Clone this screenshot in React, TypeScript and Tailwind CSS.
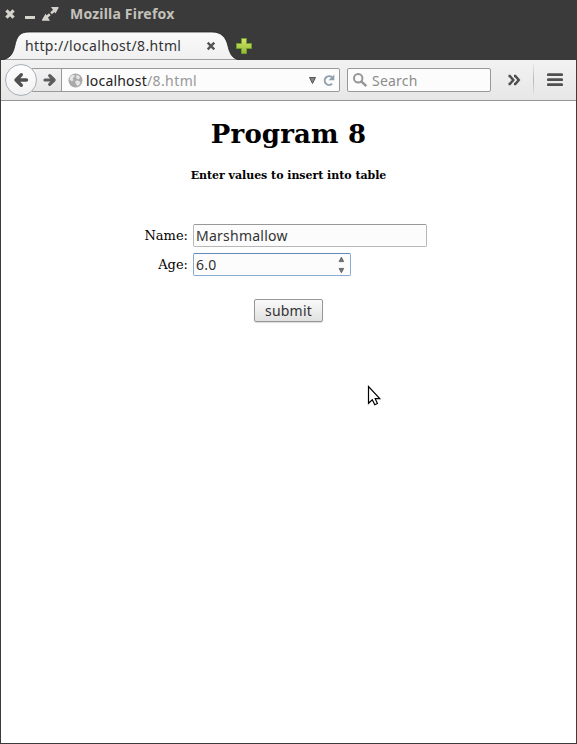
const UI = "font-['Noto_Sans','Open_Sans',sans-serif]";

function TitleBar() {
  return (
    <div className="flex h-7 items-center">
      <svg className="ml-[3px] shrink-0" width="56" height="28" viewBox="0 0 56 28" fill="none">
        <path d="M2.4 10.4 9.6 17.6M9.6 10.4 2.4 17.6" stroke="#d6d3cc" strokeWidth="3.2" />
        <path d="M21 17.5h10" stroke="#d6d3cc" strokeWidth="3" />
        <path d="M42 17.5 51 10" stroke="#d6d3cc" strokeWidth="2.6" strokeDasharray="5 1.6" />
        <path d="M47 7h7.5v1L51.5 13.5zM38 20.8v-1L41.5 13.8 46 20.8z" fill="#d6d3cc" />
      </svg>
      <span className="ml-[10px] whitespace-nowrap text-[14px] font-bold leading-7 tracking-[0.2px] text-[#c4c1bb]">
        Mozilla Firefox
      </span>
    </div>
  );
}

function TabStrip() {
  return (
    <div className="flex h-8">
      <div className="relative h-8 w-[239px] shrink-0">
        <svg className="absolute inset-0" width="239" height="32" viewBox="0 0 239 32">
          <defs>
            <linearGradient id="tab" x1="0" y1="0" x2="0" y2="1">
              <stop offset="0" stopColor="#fafafa" />
              <stop offset="1" stopColor="#f0f0f0" />
            </linearGradient>
          </defs>
          <path
            d="M0 32C8 31 12 27 14 17C16 8 19 4 28 4H211C220 4 225 9 227 18C229 27 232 31 239 32Z"
            fill="url(#tab)"
            stroke="#242424"
            strokeWidth="0.8"
          />
        </svg>
        <div className="relative flex h-8 items-center pl-[24px] pt-1">
          <span className="w-[180px] whitespace-nowrap text-[14px] leading-7 tracking-[0.36px] text-[#333]">
            http://localhost/8.html
          </span>
          <svg width="12" height="12" viewBox="0 0 12 12">
            <path d="m2.7 2.7 6.6 6.6M9.3 2.7 2.7 9.3" stroke="#555" strokeWidth="2.4" />
          </svg>
        </div>
      </div>
      <svg className="-ml-[5px] mt-[9px]" width="18" height="18" viewBox="0 0 18 18">
        <defs>
          <linearGradient id="plus" x1="0" y1="0" x2="0" y2="1">
            <stop offset="0" stopColor="#d4e46c" />
            <stop offset="1" stopColor="#91bb32" />
          </linearGradient>
        </defs>
        <path
          d="M6.5 1.5h5v5h5v5h-5v5h-5v-5h-5v-5h5z"
          fill="url(#plus)"
          stroke="#6f9c2b"
        />
      </svg>
    </div>
  );
}

function NavBar() {
  return (
    <div className="flex h-[41px] items-center border-b border-[#969696] bg-linear-to-b from-[#f2f2f2] to-[#e7e7e7]">
      <div className="relative z-10 ml-[4px] flex size-8 shrink-0 items-center justify-center rounded-full border border-[#a8afb8] bg-linear-to-b from-[#fefefe] to-[#f2f2f2]">
        <svg width="16" height="16" viewBox="0 0 16 16" fill="none" stroke="#505050" strokeWidth="3.4" strokeLinejoin="round" strokeLinecap="round">
          <path d="M8.3 2.8 3 8l5.3 5.2M4 8h9.5" />
        </svg>
      </div>
      <div className="-ml-[5px] flex h-6 w-[308px] shrink-0 rounded-r-[2px] border border-[#989898] bg-[#fcfcfc]">
        <div className="flex w-[29px] items-center border-r border-[#989898] bg-linear-to-b from-[#f2f2f2] to-[#e6e6e6] pl-[10px]">
          <svg width="14" height="14" viewBox="0 0 14 14" fill="none" stroke="#5c5c5c" strokeWidth="3.2" strokeLinejoin="round" strokeLinecap="round">
            <path d="M6.7 2.6 11.1 7l-4.4 4.4M10 7H2" />
          </svg>
        </div>
        <div className="flex flex-1 items-center pl-[6px]">
          <svg width="15" height="15" viewBox="0 0 15 15">
            <circle cx="7.5" cy="7.5" r="7" fill="#aaa" />
            <path
              d="M2 3.8 4.5 2 7 2.5 6 4.5 4.5 5 5.5 7 4 8.5 1.7 6.5zM9 1.8l3 2-1 2.8-2.5-1L8 3.5zM7 8l3-.5 2.5 1.5-1 2.5L9.5 13 8 11z"
              fill="#e6e6e6"
            />
          </svg>
          <span className="ml-[3px] w-[222px] whitespace-nowrap pt-px text-[14px] leading-[22px]">
            <span className="tracking-[0.2px] text-[#222]">localhost</span>
            <span className="tracking-[0.4px] text-[#989898]">/8.html</span>
          </span>
          <svg width="30" height="14" viewBox="0 0 30 14" fill="none">
            <path d="M1.5 4.5h6L4.5 10.5z" fill="#858585" stroke="#555" />
            <path d="M24 4.2A4.4 4.4 0 1 0 24.1 10.8" stroke="#91a0af" strokeWidth="2" />
            <path d="M26.3 1.5v5.7h-5.7z" fill="#91a0af" />
          </svg>
        </div>
      </div>
      <div className="ml-[7px] flex h-6 w-[144px] shrink-0 items-center rounded-[2px] border border-[#989898] bg-[#fcfcfc] pl-[5px]">
        <svg width="15" height="15" viewBox="0 0 15 15" fill="none" stroke="#969696">
          <circle cx="5.2" cy="5.2" r="4.2" strokeWidth="2" />
          <path d="m8.3 8.3 5 4.8" strokeWidth="2.5" />
        </svg>
        <span className="ml-[4px] pt-px text-[14px] leading-[22px] tracking-[0.2px] text-[#8c8c8c]">Search</span>
      </div>
      <svg className="ml-[16px] shrink-0" width="14" height="12" viewBox="0 0 14 12" fill="none" stroke="#4d4d4d" strokeWidth="2.4">
        <path d="M1.5 2h1.3l3.5 4-3.5 4H1.5M7 2h1.3l3.5 4-3.5 4H7" />
      </svg>
      <div className="ml-[12px] h-8 w-px bg-linear-to-b from-[#e8e8e8] via-[#aeb9c4] to-[#e8e8e8]" />
      <svg className="ml-[13px]" width="16" height="14" viewBox="0 0 16 14">
        <path d="M1.3 1.7h13.4M1.3 6.7h13.4M1.3 11.7h13.4" stroke="#505050" strokeWidth="2.7" strokeLinecap="round" />
      </svg>
    </div>
  );
}

function Page() {
  return (
    <main className="flex-1 bg-white font-['DejaVu_Serif',serif] text-black">
      <h1 className="pt-[17px] text-center text-[26px] font-bold leading-[32px] tracking-[0.15px]">Program 8</h1>
      <h5 className="mt-[19px] text-center text-[11px] font-bold leading-[14px] tracking-[-0.03px]">Enter values to insert into table</h5>
      <form className="mt-[41px]">
        <div className="flex h-[23px] items-center">
          <label className="w-[187px] text-right text-[13px] leading-[18px]">Name:</label>
          <div className={`${UI} ml-[5px] h-[23px] w-[234px] rounded-[2px] border border-[#b8b8b8] border-t-[#989898] bg-[#fcfcfc] pl-[2px] text-[14px] leading-[22px] tracking-[0.24px] text-[#333]`}>
            Marshmallow
          </div>
        </div>
        <div className="mt-[6px] flex h-[23px] items-center">
          <label className="w-[187px] text-right text-[13px] leading-[18px]">Age:</label>
          <div className={`${UI} ml-[5px] flex h-[23px] w-[158px] items-center justify-between rounded-[2px] border border-[#8caccf] border-t-[#6489b8] bg-[#fcfcfc] pl-[2px] pr-[5px] text-[14px] leading-[22px] text-[#333]`}>
            <span className="tracking-[0.2px]">6.0</span>
            <svg width="8" height="18" viewBox="0 0 8 18" fill="#777" stroke="#555" strokeWidth="0.8">
              <path d="m4.4 1.2 2.3 4.4H2.1zM4.4 16.8 6.7 12.4H2.1z" />
            </svg>
          </div>
        </div>
        <div className={`${UI} ml-[253px] mt-[23px] flex h-[23px] w-[69px] items-center justify-center rounded-[2px] border border-[#979797] bg-linear-to-b from-[#fafafa] to-[#e1e1e1] text-[14px] leading-[20px] tracking-[0.2px] text-[#333] shadow-[0_1px_1px_#ddd]`}>
          submit
        </div>
      </form>
      <svg className="ml-[366px] mt-[63px]" width="16" height="22" viewBox="0 0 16 22">
        <path d="M1.5 1.5v16.8l3.8-3.6 2.5 5 2.6-1.2-2.2-4.8h4.6z" fill="#fff" stroke="#000" strokeWidth="1.2" />
      </svg>
    </main>
  );
}

export default function App() {
  return (
    <div className={`${UI} flex h-[744px] w-[577px] flex-col overflow-hidden border-x border-b border-[#3c3b37] bg-[#3a3a3a]`}>
      <TitleBar />
      <TabStrip />
      <NavBar />
      <Page />
    </div>
  );
}
